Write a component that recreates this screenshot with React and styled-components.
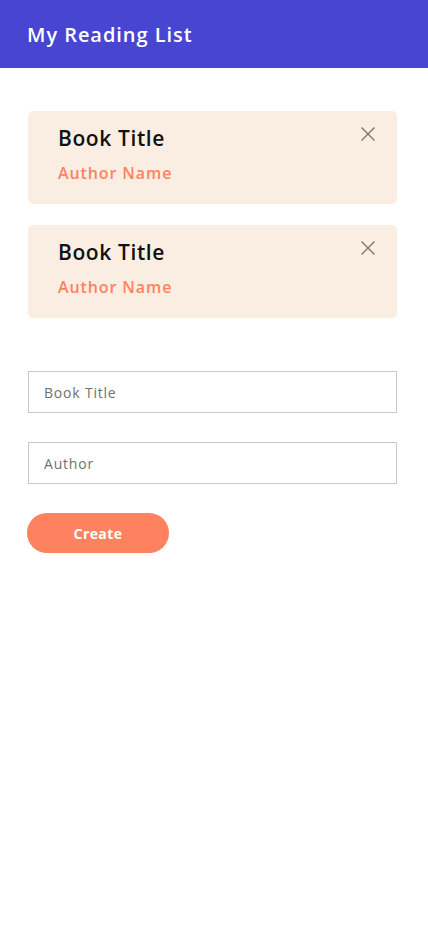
import React from "react";
import styled, { createGlobalStyle } from "styled-components";

const GlobalStyle = createGlobalStyle`
  body {
    margin: 0;
    background: #fff;
    font-family: "Open Sans", "Liberation Sans", sans-serif;
  }
  * {
    box-sizing: border-box;
  }
`;

const Header = styled.header`
  height: 68px;
  background-color: #4845d2;
  display: flex;
  align-items: center;
  padding-left: 27px;

  h1 {
    margin: 0;
    color: #fff;
    font-size: 20px;
    font-weight: 600;
    letter-spacing: 0.95px;
  }
`;

const Main = styled.main`
  width: 369px;
  margin-left: 28px;
  padding-top: 43px;
`;

const BookList = styled.ul`
  list-style: none;
  margin: 0;
  padding: 0;
  display: flex;
  flex-direction: column;
  gap: 21px;
`;

const BookCard = styled.li`
  position: relative;
  height: 93px;
  background-color: #faeee3;
  border-radius: 5px;
  padding: 13px 30px 0;

  h2 {
    margin: 0;
    font-size: 21px;
    font-weight: 600;
    line-height: 28px;
    letter-spacing: 0.6px;
    color: #111;
  }

  p {
    margin: 10px 0 0;
    font-size: 16px;
    font-weight: 600;
    line-height: 22px;
    letter-spacing: 0.9px;
    color: #ff8260;
  }
`;

const RemoveButton = styled.button`
  position: absolute;
  top: 13px;
  right: 19px;
  width: 20px;
  height: 20px;
  padding: 0;
  border: none;
  background: none;
  cursor: pointer;
  display: flex;
  align-items: center;
  justify-content: center;
`;

const BookForm = styled.form`
  margin-top: 53px;
  display: flex;
  flex-direction: column;

  input {
    height: 42px;
    width: 100%;
    border: 1px solid #c8c8c8;
    padding: 0 15px;
    font-family: inherit;
    font-size: 14px;
    letter-spacing: 0.8px;
    color: #333;
    margin-bottom: 29px;

    &::placeholder {
      color: #707070;
    }
  }
`;

const CreateButton = styled.button`
  align-self: flex-start;
  margin-left: -1px;
  width: 142px;
  height: 40px;
  border: none;
  border-radius: 20px;
  background-color: #ff8260;
  color: #fff;
  font-family: inherit;
  font-size: 14px;
  font-weight: 700;
  letter-spacing: 0.4px;
  cursor: pointer;
`;

const books = [
  { id: 1, title: "Book Title", author: "Author Name" },
  { id: 2, title: "Book Title", author: "Author Name" },
];

const CloseIcon = () => (
  <svg width="16" height="16" viewBox="0 0 16 16" fill="none">
    <path d="M1.5 1.5 L14.5 14.5 M14.5 1.5 L1.5 14.5" stroke="#7a7572" strokeWidth="1.4" />
  </svg>
);

const App = () => {
  return (
    <>
      <GlobalStyle />
      <Header>
        <h1>My Reading List</h1>
      </Header>
      <Main>
        <BookList>
          {books.map((book) => (
            <BookCard key={book.id}>
              <h2>{book.title}</h2>
              <p>{book.author}</p>
              <RemoveButton aria-label="Remove book">
                <CloseIcon />
              </RemoveButton>
            </BookCard>
          ))}
        </BookList>
        <BookForm onSubmit={(e) => e.preventDefault()}>
          <input type="text" placeholder="Book Title" />
          <input type="text" placeholder="Author" />
          <CreateButton type="submit">Create</CreateButton>
        </BookForm>
      </Main>
    </>
  );
};

export default App;
